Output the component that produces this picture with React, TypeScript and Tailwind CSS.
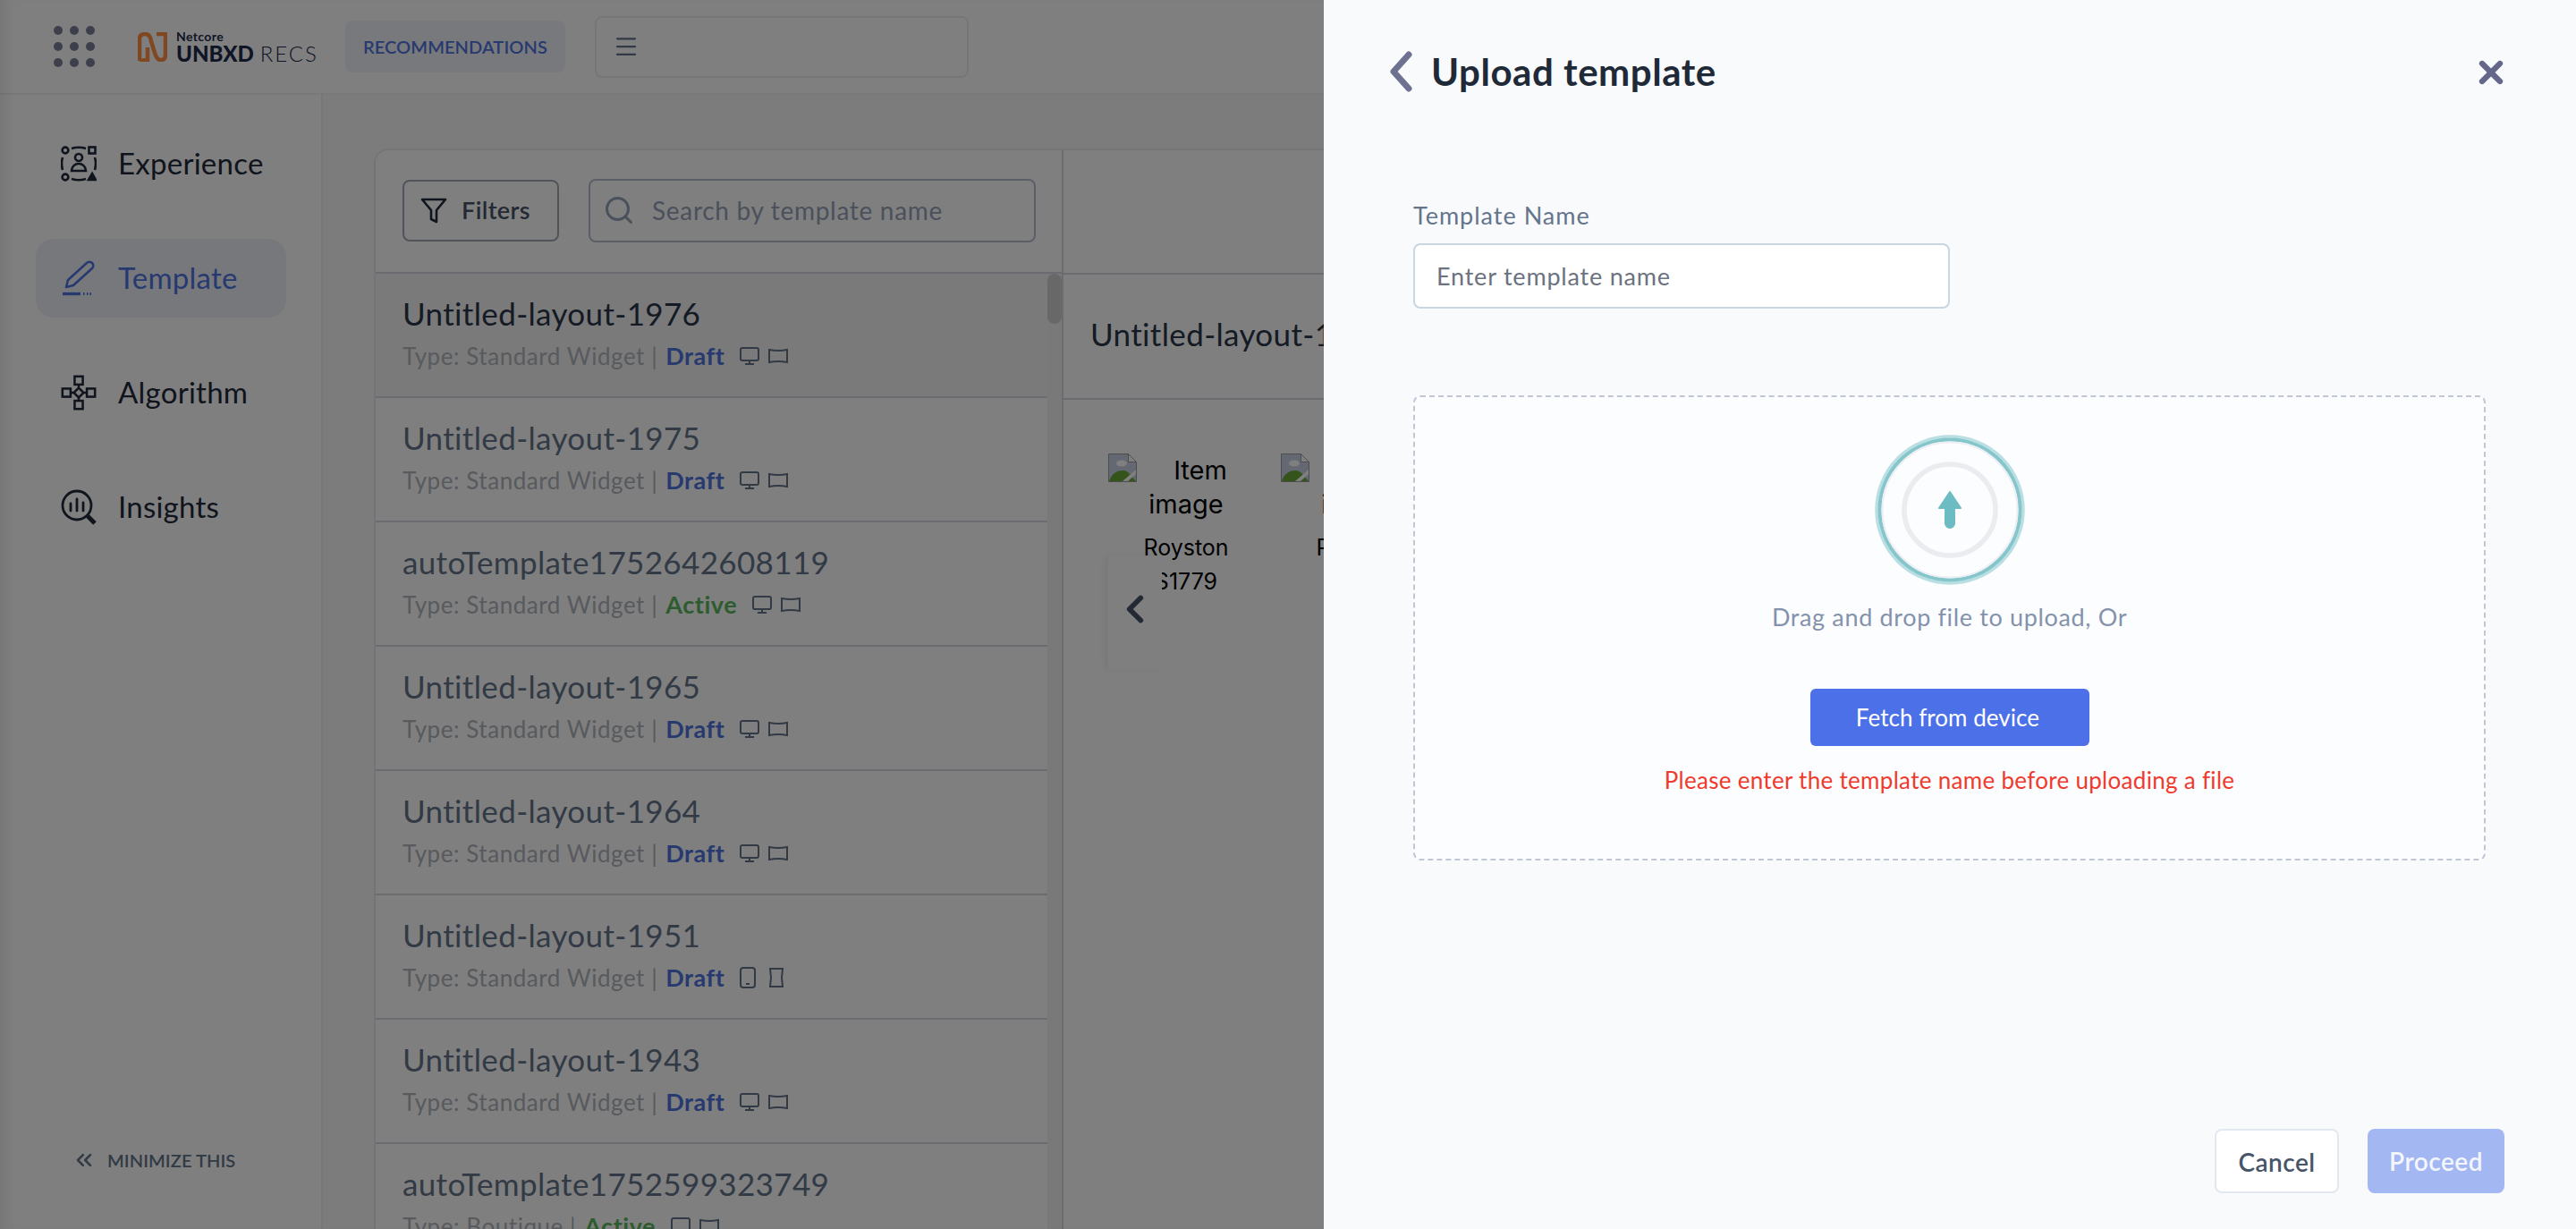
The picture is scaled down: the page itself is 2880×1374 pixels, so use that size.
import { ReactNode } from 'react';
import { ChevronLeft, ChevronsLeft, Menu, Search, X } from 'lucide-react';

type Row = { name: string; type: string; status: 'Draft' | 'Active'; mobile?: boolean };

const ROWS: Row[] = [
  { name: 'Untitled-layout-1976', type: 'Standard Widget', status: 'Draft' },
  { name: 'Untitled-layout-1975', type: 'Standard Widget', status: 'Draft' },
  { name: 'autoTemplate1752642608119', type: 'Standard Widget', status: 'Active' },
  { name: 'Untitled-layout-1965', type: 'Standard Widget', status: 'Draft' },
  { name: 'Untitled-layout-1964', type: 'Standard Widget', status: 'Draft' },
  { name: 'Untitled-layout-1951', type: 'Standard Widget', status: 'Draft', mobile: true },
  { name: 'Untitled-layout-1943', type: 'Standard Widget', status: 'Draft' },
  { name: 'autoTemplate1752599323749', type: 'Boutique', status: 'Active' },
];

function ExperienceIcon() {
  return (
    <svg width="40" height="40" viewBox="0 0 40 40" fill="none" stroke="currentColor" strokeWidth="2.6">
      <circle cx="5" cy="5" r="3.4" />
      <rect x="31.5" y="1.5" width="7" height="7" />
      <circle cx="5" cy="35" r="3.4" />
      <path d="M35 31l4 7h-8z" fill="currentColor" />
      <path d="M12 3q8-2.500 16 0M12 37q8 2.500 16 0M2 13q-2 7 0 14M38 13q2 7 0 14" />
      <circle cx="20" cy="13" r="4" />
      <path d="M12 28c0-5 4-8 8-8s8 3 8 8z" />
    </svg>
  );
}

function PencilIcon() {
  return (
    <svg width="40" height="40" viewBox="0 0 40 40" fill="none" stroke="currentColor" strokeWidth="2.6" strokeLinejoin="round">
      <path d="M6 30l2-8L29 3a4 4 0 0 1 6 6L14 28z" />
      <path d="M2 37.500h20" strokeWidth="3.400" />
      <path d="M25 37.500h1.500M29 37.500h1.500M32.500 37.500h1.500" strokeWidth="3" />
    </svg>
  );
}

function AlgorithmIcon() {
  return (
    <svg width="44" height="44" viewBox="0 0 44 44" fill="none" stroke="currentColor" strokeWidth="2.8">
      <rect x="17" y="2" width="10" height="10" />
      <rect x="2" y="17" width="10" height="10" />
      <rect x="32" y="17" width="10" height="10" />
      <rect x="17" y="32" width="10" height="10" />
      <path d="M22 16l6 6-6 6-6-6zM22 12v4M22 28v4M12 22h4M28 22h4" />
    </svg>
  );
}

function InsightsIcon() {
  return (
    <svg width="40" height="40" viewBox="0 0 40 40" fill="none" stroke="currentColor" strokeWidth="2.8">
      <circle cx="18" cy="18" r="16" />
      <path d="M11 16v8M18 11v13M25 15v9" strokeLinecap="round" />
      <path d="M30 30l8 8" strokeWidth="5" />
    </svg>
  );
}

function DeviceIcons({ mobile }: { mobile?: boolean }) {
  if (mobile) {
    return (
      <span className="ml-[17px] flex items-center gap-[14px] text-[#64748b]">
        <svg width="18" height="24" viewBox="0 0 18 24" fill="none" stroke="currentColor" strokeWidth="2">
          <rect x="1" y="1" width="16" height="22" rx="3" />
          <path d="M7 19h4" />
        </svg>
        <svg width="18" height="22" viewBox="0 0 18 22" fill="none" stroke="currentColor" strokeWidth="2">
          <path d="M2 1h14l-1 10 1 10H2l1-10z" />
        </svg>
      </span>
    );
  }
  return (
    <span className="ml-[17px] flex items-center gap-[10px] text-[#64748b]">
      <svg width="22" height="20" viewBox="0 0 22 20" fill="none" stroke="currentColor" strokeWidth="2">
        <rect x="1" y="1" width="20" height="14" rx="2" />
        <path d="M11 15v4M6 19h10" />
      </svg>
      <svg width="22" height="18" viewBox="0 0 22 18" fill="none" stroke="currentColor" strokeWidth="2">
        <path d="M1 2q10 2 20 0v14q-10-2-20 0z" />
      </svg>
    </span>
  );
}

function NavItem({ icon, label, active }: { icon: ReactNode; label: string; active?: boolean }) {
  return (
    <div
      className={`flex h-[88px] w-[280px] items-center gap-[24px] rounded-[20px] pl-[28px] text-[33px] tracking-[0.25px] ${
        active ? 'bg-[#eff1f8] text-[#4f74e0]' : 'text-[#1e293b]'
      }`}
    >
      <span className="flex w-[40px] justify-center">{icon}</span>
      {label}
    </div>
  );
}

function ListRow({ row, selected }: { row: Row; selected: boolean }) {
  return (
    <div className={`h-[139px] shrink-0 border-b-2 border-[#d5d9e0] pl-[30px] pt-[22px] ${selected ? 'bg-[#f5f5f5]' : ''}`}>
      <div className={`text-[35px] leading-[44px] tracking-[0.35px] ${selected ? 'text-[#2a3648]' : 'text-[#64748b]'}`}>{row.name}</div>
      <div className="mt-[8px] flex items-center text-[26px] leading-[36px] tracking-[0.55px] text-[#b0b4bc]">
        <span>Type: {row.type} |</span>
        <span className={`ml-[9px] text-[27px] font-bold ${row.status === 'Draft' ? 'text-[#4f74e0]' : 'text-[#5cb85c]'}`}>{row.status}</span>
        <DeviceIcons mobile={row.mobile} />
      </div>
    </div>
  );
}

function BrokenImage() {
  return (
    <svg className="float-left" width="32" height="32" viewBox="0 0 32 32">
      <path d="M.5.500h22l9 9v22H.500z" fill="#c8d0e4" stroke="#9a9a9a" />
      <path d="M22.500.500v9h9z" fill="#fff" stroke="#9a9a9a" />
      <ellipse cx="15" cy="11" rx="6" ry="3.500" fill="#fff" />
      <path d="M1 31c3-9 9-12 15-12 4 0 7 2 9 5l6 7z" fill="#68a838" />
      <path d="M16 31L31 18v5L22 31z" fill="#fff" />
    </svg>
  );
}

function ItemCard({ title, sku }: { title: string; sku: string }) {
  return (
    <div className="w-[174px] shrink-0 text-center font-[family-name:Inter,sans-serif] text-black">
      <div className="text-[29px] leading-[38px]">
        <BrokenImage />
        Item image
      </div>
      <div className="mt-[10px] text-[25px] leading-[38px]">{title}</div>
      <div className="text-[25px] leading-[38px]">{sku}</div>
    </div>
  );
}

export default function App() {
  return (
    <div className="relative h-[1374px] w-[2880px] overflow-hidden bg-[#f9f9f9] font-[family-name:Lato,sans-serif]">
      {/* Top bar */}
      <header className="flex h-[106px] items-center border-b-2 border-[#f1f2f4] bg-white pl-[60px]">
        <div className="grid w-[46px] grid-cols-3 gap-[8px]">
          {Array.from({ length: 9 }).map((_, i) => (
            <span key={i} className="h-[10px] w-[10px] rounded-full bg-[#7c7f99]" />
          ))}
        </div>
        <svg className="ml-[48px]" width="33" height="33" viewBox="0 0 33 33" fill="none" stroke="#ff8f45" strokeWidth="4.500">
          <path d="M2 32V8q0-6 6-6t7 8l4 13q2 8 7 8t5-6V2H21M2 32l9-1V17" />
        </svg>
        <div className="ml-[10px] flex flex-col text-[#1e2a4a]">
          <span className="text-[14px] font-bold leading-[14px] tracking-[0.4px]">Netcore</span>
          <span className="mt-[2px] flex items-baseline text-[24px] leading-[20px]">
            <span className="font-black">UNBXD</span>
            <span className="ml-[7px] font-light tracking-[2px]">RECS</span>
          </span>
        </div>
        <div className="ml-[30px] flex h-[58px] w-[246px] items-center justify-center rounded-[8px] bg-[#f0f2f8] text-[20px] font-semibold tracking-[0.1px] text-[#4f74e0]">
          RECOMMENDATIONS
        </div>
        <div className="ml-[33px] flex h-[69px] w-[418px] items-center rounded-[8px] border-2 border-[#eaecf0] pl-[18px] text-[#64748b]">
          <Menu size={30} strokeWidth={1.8} />
        </div>
      </header>

      <div className="flex h-[1268px]">
        {/* Sidebar */}
        <aside className="relative flex w-[361px] shrink-0 flex-col border-r-2 border-[#eeeff1] bg-white pl-[40px] pt-[33px]">
          <NavItem icon={<ExperienceIcon />} label="Experience" />
          <div className="mt-[40px] flex flex-col gap-[40px]">
            <NavItem active icon={<span className="text-[#4f74e0]"><PencilIcon /></span>} label="Template" />
            <NavItem icon={<AlgorithmIcon />} label="Algorithm" />
            <NavItem icon={<InsightsIcon />} label="Insights" />
          </div>
          <div className="mt-auto mb-[62px] ml-[40px] flex items-center gap-[12px] text-[20px] font-semibold tracking-[0.1px] text-[#64748b]">
            <ChevronsLeft size={28} strokeWidth={2.2} />
            MINIMIZE THIS
          </div>
        </aside>

        {/* Template list + preview */}
        <main className="min-w-0 flex-1 pl-[57px] pt-[60px]">
          <div className="flex h-full rounded-tl-[16px] border-l-2 border-t-2 border-[#e7e9ed] bg-white">
            <div className="flex w-[769px] shrink-0 flex-col border-r-2 border-[#d5d9e0]">
              <div className="flex h-[138px] shrink-0 items-center gap-[33px] border-b-2 border-[#d5d9e0] pb-[2px] pl-[30px]">
                <div className="flex h-[69px] w-[175px] items-center gap-[16px] rounded-[8px] border-2 border-[#a0a8b4] pl-[18px] text-[27px] font-semibold tracking-[0.4px] text-[#475569]">
                  <svg width="30" height="30" viewBox="0 0 30 30" fill="none" stroke="#1e293b" strokeWidth="2.600" strokeLinejoin="round">
                    <path d="M2 3h26L18 15v13l-6-3V15z" />
                  </svg>
                  Filters
                </div>
                <div className="flex h-[71px] w-[500px] items-center gap-[19px] rounded-[8px] border-2 border-[#b6bdc9] pl-[14px] text-[28px] tracking-[0.7px] text-[#94a3b8]">
                  <Search size={36} strokeWidth={2} className="text-[#94a3b8]" />
                  Search by template name
                </div>
              </div>
              <div className="relative flex min-h-0 flex-1 flex-col overflow-hidden">
                {ROWS.map((row, i) => (
                  <ListRow key={row.name} row={row} selected={i === 0} />
                ))}
                <div className="absolute inset-y-0 right-0 w-[16px] bg-[#f2f2f2]">
                  <div className="h-[56px] rounded-full bg-[#d0d0d0]" />
                </div>
              </div>
            </div>

            <div className="relative min-w-0 flex-1">
              <div className="h-[139px] border-b-2 border-[#d5d9e0]" />
              <div className="flex h-[140px] items-center overflow-hidden whitespace-nowrap border-b-2 border-[#d5d9e0] pb-[6px] pl-[30px] text-[35px] tracking-[0.35px] text-[#2a3648]">
                Untitled-layout-1976
              </div>
              <div className="flex gap-[19px] pl-[50px] pt-[60px]">
                <ItemCard title="Royston" sku="S1779" />
                <ItemCard title="Royston" sku="S1779" />
              </div>
              <div className="absolute left-[50px] top-[454px] flex h-[127px] w-[60px] items-center justify-center rounded-[4px] bg-white shadow-[-4px_0_8px_rgba(0,0,0,0.06)]">
                <ChevronLeft size={50} strokeWidth={2.8} className="-translate-y-[5px] text-[#475569]" />
              </div>
            </div>
          </div>
        </main>
      </div>

      {/* Dim layer */}
      <div className="absolute inset-0 bg-black/50 shadow-[inset_14px_0_14px_-8px_rgba(0,0,0,0.08)]" />

      {/* Upload drawer */}
      <section className="absolute inset-y-0 right-0 flex w-[1400px] flex-col bg-[#f8fafc] pl-[100px] pr-[80px]">
        <div className="-ml-[27px] mt-[54px] flex h-[52px] items-center gap-[19px] text-[#1f2937]">
          <svg width="28" height="46" viewBox="0 0 28 46" fill="none" stroke="#6f7191" strokeWidth="7" strokeLinecap="round" strokeLinejoin="round">
            <path d="M22 4L5 23l17 19" />
          </svg>
          <h1 className="text-[42px] font-bold tracking-[0.55px]">Upload template</h1>
        </div>

        <label className="mt-[117px] text-[27px] leading-[36px] tracking-[1px] text-[#64748b]">Template Name</label>
        <input
          readOnly
          placeholder="Enter template name"
          className="mt-[13px] h-[73px] w-[600px] rounded-[8px] border-2 border-[#cbd5e1] bg-white pl-[24px] text-[27px] tracking-[0.8px] outline-none placeholder:text-[#6b7280]"
        />

        <div className="mt-[97px] flex h-[520px] w-[1199px] flex-col items-center rounded-[8px] border-2 border-dashed border-[#c0c6d4] bg-[#fcfdff]">
          <svg className="mt-[42px]" width="168" height="168" viewBox="0 0 168 168" fill="none">
            <circle cx="84" cy="84" r="82" stroke="#b9dfe2" strokeWidth="3.500" />
            <circle cx="84" cy="84" r="78.500" stroke="#84c6cb" strokeWidth="4" />
            <circle cx="84" cy="84" r="75.500" stroke="#eceef3" strokeWidth="2" />
            <circle cx="84" cy="84" r="51" stroke="#eaecf0" strokeWidth="5.500" />
            <path d="M84 64L96 82H89V99a5 5 0 0 1-10 0V82H72z" fill="#6dbcc3" stroke="#6dbcc3" strokeWidth="2" strokeLinejoin="round" />
          </svg>
          <p className="mt-[18px] text-[27px] leading-[36px] tracking-[0.65px] text-[#8492ab]">Drag and drop file to upload, Or</p>
          <button className="mt-[62px] h-[64px] w-[312px] rounded-[6px] bg-[#4b70e8] pr-[4px] text-[26px] tracking-[0.05px] text-white">Fetch from device</button>
          <p className="mt-[20px] text-[26px] leading-[36px] tracking-[0.3px] text-[#ef3a2d]">Please enter the template name before uploading a file</p>
        </div>

        <div className="mt-auto mb-[40px] flex justify-end gap-[32px]">
          <button className="h-[72px] w-[139px] rounded-[8px] border-2 border-[#e2e8f0] bg-white pt-[2px] text-[28px] font-semibold tracking-[0.5px] text-[#475569]">Cancel</button>
          <button className="h-[72px] w-[153px] rounded-[8px] bg-[#a3b7f2] text-[28px] font-semibold tracking-[0.5px] text-[#f4f6fe]">Proceed</button>
        </div>

        <button className="absolute right-[75px] top-[61px] text-[#64668a]">
          <X size={40} strokeWidth={3.8} />
        </button>
      </section>
    </div>
  );
}
